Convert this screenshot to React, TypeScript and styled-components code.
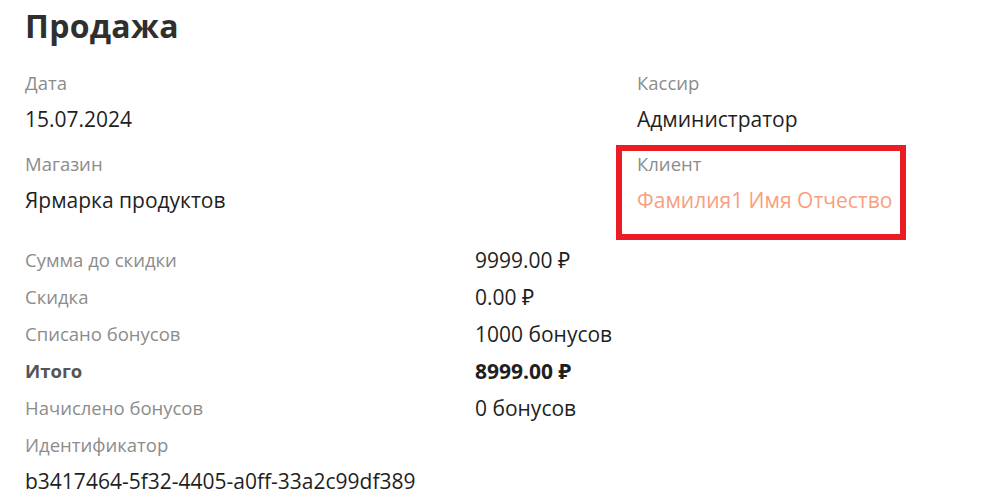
import React from "react";
import styled, { createGlobalStyle } from "styled-components";

const GlobalStyle = createGlobalStyle`
  html, body { margin: 0; padding: 0; background: #ffffff; }
  body { font-family: "Open Sans", "Noto Sans", sans-serif; color: #222; }
`;

const Page = styled.div`
  padding: 6px 25px 0 25px;
  display: flex;
  flex-direction: column;
`;

const Title = styled.h1`
  margin: 0 0 25px 0;
  font-size: 32px;
  line-height: 40px;
  font-weight: 700;
  color: #2f2f2f;
  letter-spacing: 0.3px;
`;

const InfoGrid = styled.div`
  display: grid;
  grid-template-columns: 612px 1fr;
`;

const Field = styled.div<{ $highlight?: boolean }>`
  position: relative;
  display: flex;
  flex-direction: column;
  gap: 12px;
  padding-bottom: 21px;
  ${(p) =>
    p.$highlight &&
    `
    &::after {
      content: "";
      position: absolute;
      top: -7px;
      left: -21px;
      width: 290px;
      height: 95px;
      box-sizing: border-box;
      border: 6px solid #ea1c24;
      pointer-events: none;
    }
  `}
`;

const Label = styled.div<{ $strong?: boolean }>`
  font-size: 18.5px;
  line-height: 24px;
  color: ${(p) => (p.$strong ? "#555555" : "#8c8c8c")};
  font-weight: ${(p) => (p.$strong ? 700 : 400)};
  white-space: nowrap;
`;

const Value = styled.div<{ $accent?: boolean; $strong?: boolean }>`
  font-size: 21px;
  line-height: 24px;
  color: ${(p) => (p.$accent ? "#f7a07f" : "#1f1f1f")};
  font-weight: ${(p) => (p.$strong ? 700 : 400)};
  white-space: nowrap;
`;

const Summary = styled.div`
  margin-top: 15px;
  display: grid;
  grid-template-columns: 450px 1fr;
  row-gap: 13px;
`;

const Identifier = styled.div`
  margin-top: 13px;
  display: flex;
  flex-direction: column;
  gap: 12px;
`;

const summary = [
  { label: "Сумма до скидки", value: "9999.00 ₽" },
  { label: "Скидка", value: "0.00 ₽" },
  { label: "Списано бонусов", value: "1000 бонусов" },
  { label: "Итого", value: "8999.00 ₽", strong: true },
  { label: "Начислено бонусов", value: "0 бонусов" },
];

export default function App() {
  return (
    <>
      <GlobalStyle />
      <Page>
        <Title>Продажа</Title>
        <InfoGrid>
          <Field>
            <Label>Дата</Label>
            <Value>15.07.2024</Value>
          </Field>
          <Field>
            <Label>Кассир</Label>
            <Value>Администратор</Value>
          </Field>
          <Field>
            <Label>Магазин</Label>
            <Value>Ярмарка продуктов</Value>
          </Field>
          <Field $highlight>
            <Label>Клиент</Label>
            <Value $accent>Фамилия1 Имя Отчество</Value>
          </Field>
        </InfoGrid>
        <Summary>
          {summary.map((row) => (
            <React.Fragment key={row.label}>
              <Label $strong={row.strong}>{row.label}</Label>
              <Value $strong={row.strong}>{row.value}</Value>
            </React.Fragment>
          ))}
        </Summary>
        <Identifier>
          <Label>Идентификатор</Label>
          <Value>b3417464-5f32-4405-a0ff-33a2c99df389</Value>
        </Identifier>
      </Page>
    </>
  );
}
